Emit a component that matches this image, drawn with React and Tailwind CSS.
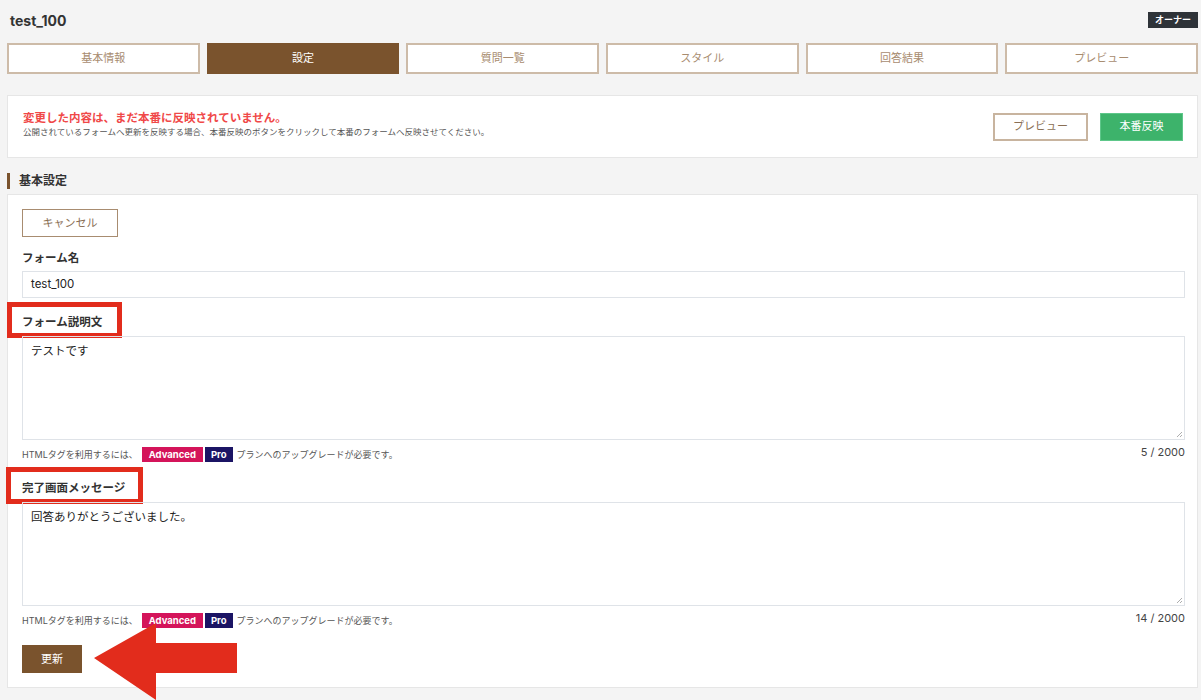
const tabs = ['基本情報', '設定', '質問一覧', 'スタイル', '回答結果', 'プレビュー']

function PlanNote({ count }) {
  return (
    <div className="flex items-center justify-between mt-[6px] h-[16px]">
      <div className="flex items-center text-[9px] text-[#555]">
        <span>HTMLタグを利用するには、</span>
        <span className="ml-[4px] bg-[#d4145a] text-white font-bold px-[7px] h-[15px] leading-[15px] text-[9.5px]">Advanced</span>
        <span className="ml-[2px] bg-[#1b1464] text-white font-bold px-[6px] h-[15px] leading-[15px] text-[9.5px]">Pro</span>
        <span className="ml-[4px]">プランへのアップグレードが必要です。</span>
      </div>
      <span className="text-[11px] text-[#444] -mt-[4px]">{count} / 2000</span>
    </div>
  )
}

function Label({ children, boxed, boxClass }) {
  return (
    <div className="relative h-[26px] flex items-center text-[11.5px] font-bold text-[#333]">
      {children}
      {boxed && <div className={`absolute border-[5px] border-[#e22c1c] ${boxClass}`}></div>}
    </div>
  )
}

export default function App() {
  return (
    <div
      className="relative w-[1201px] h-[700px] overflow-hidden bg-[#f4f4f4] pl-[7px] pr-[3px]"
      style={{ fontFamily: 'Inter, "Noto Sans CJK JP", sans-serif' }}
    >
      {/* header */}
      <div className="flex justify-between h-[43px]">
        <h1 className="pl-[3px] pt-[10px] text-[14px] font-bold text-[#333]">test_100</h1>
        <span className="mt-[12px] h-[16px] px-[7px] bg-[#2e3338] text-white text-[9px] font-bold leading-[16px]">オーナー</span>
      </div>

      {/* tabs */}
      <div className="grid grid-cols-6 gap-[7px] h-[31px]">
        {tabs.map((t, i) => (
          <div
            key={t}
            className={`flex items-center justify-center text-[11px] border-[2px] ${i === 1 ? 'bg-[#7a532d] border-[#7a532d] text-white' : 'bg-white border-[#cdbba8] text-[#a88c70]'}`}
          >
            {t}
          </div>
        ))}
      </div>

      {/* notice */}
      <div className="mt-[21px] h-[63px] bg-white border border-[#e6e6e6] flex items-center justify-between pl-[15px] pr-[14px]">
        <div className="-mt-[4px]">
          <p className="text-[11.5px] font-bold text-[#f04848] leading-[15px]">変更した内容は、まだ本番に反映されていません。</p>
          <p className="text-[8.5px] text-[#555] leading-[13px]">公開されているフォームへ更新を反映する場合、本番反映のボタンをクリックして本番のフォームへ反映させてください。</p>
        </div>
        <div className="flex items-center gap-[12px]">
          <button className="w-[95px] h-[28px] border-[2px] border-[#c8b49f] bg-white text-[#8a6f55] text-[11px]">プレビュー</button>
          <button className="w-[83px] h-[28px] bg-[#3db36b] border border-[#5ec78a] text-white text-[11px]">本番反映</button>
        </div>
      </div>

      {/* section heading */}
      <div className="mt-[10px] h-[26px] flex items-center">
        <span className="w-[3px] h-[16px] bg-[#7a532d]"></span>
        <span className="ml-[9px] text-[12px] font-bold text-[#333]">基本設定</span>
      </div>

      {/* card */}
      <div className="relative bg-white border border-[#e6e6e6] h-[494px] pl-[14px] pr-[12px] pt-[14px]">
        <button className="w-[96px] h-[28px] border-[1.5px] border-[#a88c70] text-[#8a6f55] text-[11px] bg-white">キャンセル</button>

        <div className="mt-[8px]">
          <Label>フォーム名</Label>
          <div className="h-[27px] border border-[#dfe3e8] flex items-center pl-[8px] text-[11.5px] text-[#222]">test_100</div>
        </div>

        <div className="mt-[11px]">
          <Label boxed boxClass="-left-[15px] -top-[7px] w-[115px] h-[36px]">フォーム説明文</Label>
          <div className="mt-[1px] h-[104px] border border-[#dfe3e8] pl-[8px] pt-[6px] text-[11.5px] text-[#222] relative">
            テストです
            <svg className="absolute right-[1px] bottom-[1px]" width="7" height="7" viewBox="0 0 7 7"><path d="M6 1L1 6M6 4L4 6" stroke="#999" strokeWidth="0.8" /></svg>
          </div>
          <PlanNote count={5} />
        </div>

        <div className="mt-[13px]">
          <Label boxed boxClass="-left-[16px] -top-[8px] w-[137px] h-[37px]">完了画面メッセージ</Label>
          <div className="mt-[1px] h-[104px] border border-[#dfe3e8] pl-[8px] pt-[6px] text-[11.5px] text-[#222] relative">
            回答ありがとうございました。
            <svg className="absolute right-[1px] bottom-[1px]" width="7" height="7" viewBox="0 0 7 7"><path d="M6 1L1 6M6 4L4 6" stroke="#999" strokeWidth="0.8" /></svg>
          </div>
          <PlanNote count={14} />
        </div>

        <button className="mt-[17px] w-[60px] h-[28px] bg-[#7a532d] text-white text-[11px]">更新</button>
      </div>

      {/* annotation arrow */}
      <svg className="absolute left-[93px] top-[622px]" width="145" height="78" viewBox="0 0 145 78">
        <polygon points="1,36 63,1 63,21 144,21 144,51 63,51 63,78" fill="#e22c1c" />
      </svg>
    </div>
  )
}
